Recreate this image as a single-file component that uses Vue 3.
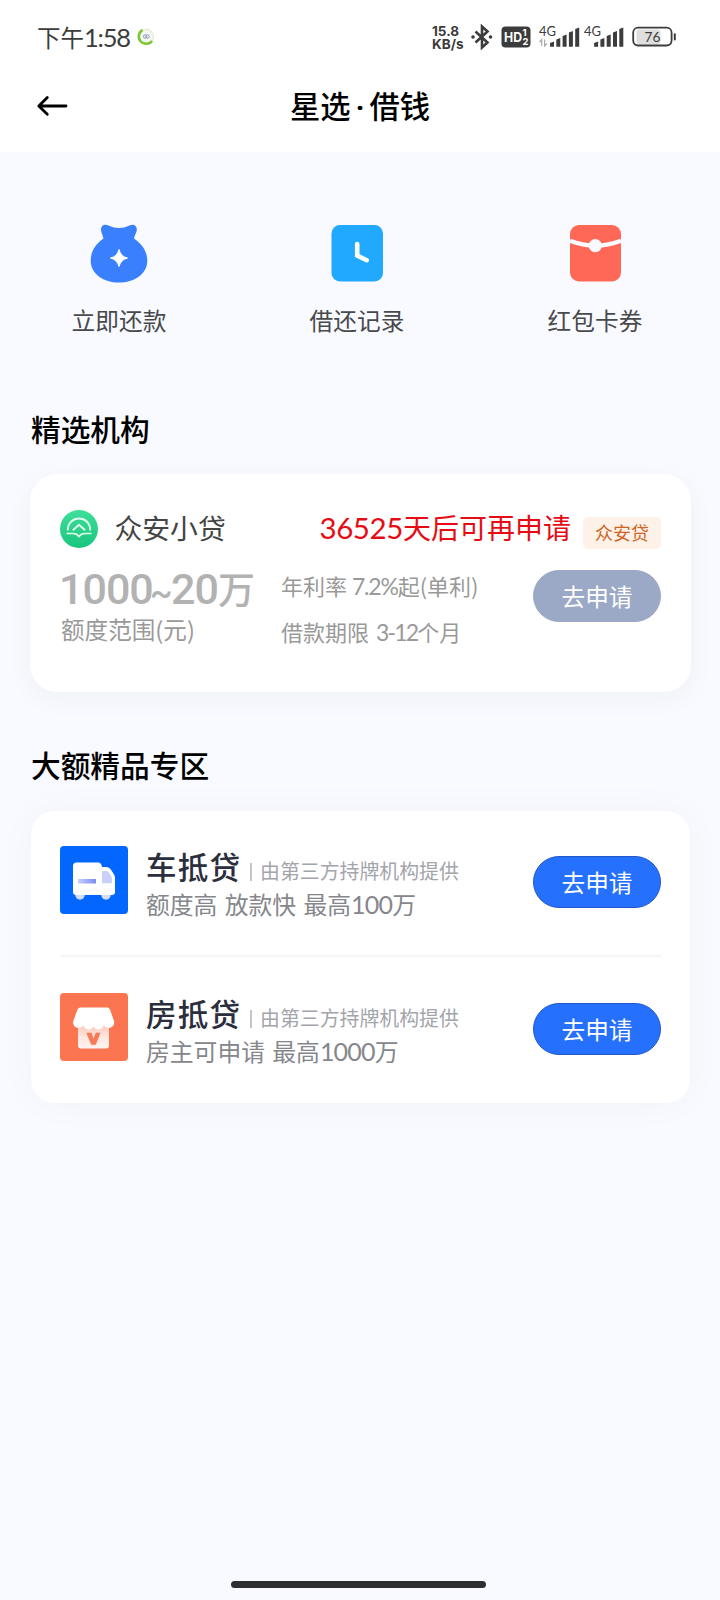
<script setup>
const loans = [
  { id: 'car', name: '车抵贷', pre: '额度高 放款快 最高', amount: '100' },
  { id: 'house', name: '房抵贷', pre: '房主可申请 最高', amount: '1000' },
]
const firstBars = [
  { x: 11, y: 42 }, { x: 17.3, y: 38.5 }, { x: 23.6, y: 35 }, { x: 29.9, y: 31.5 }, { x: 36.2, y: 28 },
]
</script>

<template>
  <div class="screen">
    <div class="status">
      <div class="clock">下午<span class="num">1:58</span></div>
      <svg class="spinner" viewBox="0 0 20 20">
        <circle cx="10" cy="10" r="7.6" fill="#f4f6f1" stroke="#dfeed3" stroke-width="1.2" />
        <path d="M6.5 3A7.4 7.4 0 1 0 16 14" fill="none" stroke="#7cc832" stroke-width="2.6" />
        <circle cx="9" cy="9.5" r="1.7" fill="none" stroke="#9199bd" />
        <circle cx="11.5" cy="9.5" r="1.7" fill="none" stroke="#9199bd" />
      </svg>
      <div class="speed"><span>15.8</span><span>KB/s</span></div>
      <svg class="bt" viewBox="0 0 24 26">
        <path d="M5.5 7.5 17.5 18.5 12 23.5V2.5L17.5 7.5 5.5 18.5" fill="none" stroke="#3c3c3c" stroke-width="2.6" />
        <circle cx="3" cy="13" r="1.8" fill="#3c3c3c" /><circle cx="20.5" cy="13" r="1.8" fill="#3c3c3c" />
      </svg>
      <svg class="hd" viewBox="0 0 30 22">
        <rect x="0.5" y="0.5" width="29" height="21" rx="4" fill="#3c3c3c" />
        <text x="3" y="15.6" font-size="13" font-weight="700" textLength="18" lengthAdjust="spacingAndGlyphs">HD</text>
        <text x="21.5" y="10" font-size="9.5" font-weight="700">1</text>
        <text x="21.5" y="19.2" font-size="9.5" font-weight="700">2</text>
      </svg>
      <svg v-for="n in 2" :key="n" class="signal" viewBox="0 24 42 26">
        <text x="0" y="35.5" font-size="13" textLength="17" lengthAdjust="spacingAndGlyphs">4G</text>
        <path v-if="n === 1" d="M2.7 46V39.5L.5 42M5.6 39.5V46L7.8 43.5" fill="none" stroke="#aaa" stroke-width="1.2" />
        <path
          v-for="b in firstBars" :key="b.x"
          :d="`M${b.x - (n === 2 ? 0.9 : 0)} ${b.y + 1}l4 -1.4V46.7h-4z`" fill="#3c3c3c"
        />
      </svg>
      <svg class="battery" viewBox="0 0 46 22">
        <rect x="4.5" y="3.5" width="24" height="15" rx="3" fill="#dedede" />
        <rect x="1.2" y="1.7" width="38.4" height="17.8" rx="5" fill="none" stroke="#3c3c3c" stroke-width="1.8" />
        <path d="M42.8 8.2v5.2" stroke="#3c3c3c" stroke-width="2" stroke-linecap="round" />
        <text x="12.5" y="15.9" font-size="14" textLength="16" lengthAdjust="spacingAndGlyphs">76</text>
      </svg>
    </div>

    <header class="header">
      <svg class="back" viewBox="0 0 32 24">
        <path d="M30 12H3M11.3 3.6 2.8 12l8.5 8.2" fill="none" stroke="#000" stroke-width="2.8" stroke-linecap="round" stroke-linejoin="round" />
      </svg>
      <h1>星选<span class="dot">·</span>借钱</h1>
    </header>

    <nav class="quick">
      <div class="entry">
        <svg viewBox="0 0 60 60">
          <path d="M14.5 15.5C13.5 11 11.7 9 12 5.8 12.5 2 16 .8 19.5 2.5Q30 7.5 40.5 2.5C44 .8 47.2 2 47.8 5.8 48.2 9 46 11 45 15.5 53 21 58.3 28.5 58.3 37.5 58.3 51.5 45 59.5 30 59.5S1.7 51.5 1.7 37.5C1.7 28.5 6.5 21 14.5 15.5Z" fill="#397ffe" />
          <path d="M30 26.5Q31.8 33.7 38.5 35 31.8 36.7 30 43.5 28.2 36.7 21.5 35 28.2 33.7 30 26.5Z" fill="#fff" stroke="#fff" stroke-linejoin="round" />
        </svg>
        <span>立即还款</span>
      </div>
      <div class="entry">
        <svg viewBox="0 0 60 60">
          <rect x="4.5" y="2" width="51.5" height="56.5" rx="8.5" fill="#21a9ff" />
          <path d="M30.2 21V32.5L39.7 37.2" fill="none" stroke="#fff" stroke-width="4.6" stroke-linecap="round" />
        </svg>
        <span>借还记录</span>
      </div>
      <div class="entry">
        <svg viewBox="0 0 60 60">
          <rect x="5" y="2" width="51" height="56.5" rx="9" fill="#ff6856" />
          <path d="M5 17.8Q30.5 27.5 56 17.8" fill="none" stroke="#f8faff" stroke-width="4.3" />
          <circle cx="30.3" cy="22.6" r="6.6" fill="#f8faff" />
        </svg>
        <span>红包卡券</span>
      </div>
    </nav>

    <h2 class="first-title">精选机构</h2>
    <section class="card partner">
      <div class="row">
        <svg class="brand" viewBox="0 0 38 38">
          <defs><linearGradient id="brandFill" x1="0" y1="0" x2="0" y2="1"><stop stop-color="#3edf99" /><stop offset="1" stop-color="#19c47f" /></linearGradient></defs>
          <circle cx="19" cy="19" r="19" fill="url(#brandFill)" />
          <g fill="none" stroke="#e3fff2" stroke-width="1.8">
            <path d="M7.8 20.5C7.6 4.5 30.4 4.5 30.2 20.5" />
            <path d="M12.8 20.2 19 14.8l6.2 5.4" stroke-width="2" />
            <path d="M6.5 23.5H13Q17 23.5 19 26.5 21 23.5 25 23.5H31.5" stroke-width="1.7" />
          </g>
        </svg>
        <span class="org">众安小贷</span>
        <span class="wait"><span class="num">36525</span>天后可再申请</span>
        <span class="tag">众安贷</span>
      </div>
      <div class="body">
        <div class="quota">
          <div class="range"><span class="low">1000</span><span class="tilde">~</span><span class="high">20</span>万</div>
          <div class="caption">额度范围(元)</div>
        </div>
        <div class="terms">
          <div>年利率 <span class="num rate">7.2%</span>起(单利)</div>
          <div>借款期限 <span class="num months">3-12</span>个月</div>
        </div>
        <button class="apply off">去申请</button>
      </div>
    </section>

    <h2 class="second-title">大额精品专区</h2>
    <section class="card loans">
      <div v-for="l in loans" :key="l.id" class="loan">
        <svg v-if="l.id === 'car'" class="thumb" viewBox="0 0 68 68">
          <defs>
            <linearGradient id="stripe"><stop stop-color="#c7cdfb" /><stop offset="1" stop-color="#7b8cf0" /></linearGradient>
          </defs>
          <rect width="68" height="68" rx="4" fill="#0367ff" />
          <circle cx="20" cy="49" r="4.7" fill="#d6dcff" /><circle cx="46" cy="49" r="4.7" fill="#d6dcff" />
          <path d="M16.5 16.5H38Q41.5 16.5 42 21H46Q49 21 50.5 23L54 28.5Q55 30 55 32V46Q55 49 52 49H16Q13 49 13 46V20Q13 16.5 16.5 16.5Z" fill="#fff" />
          <path d="M43 25H46.5Q48 25 49 26.7L51.5 31Q52 32 52 33V36Q52 37.3 50.5 37.3H42V26Q42 25 43 25Z" fill="#c9d0fa" />
          <rect x="18" y="33" width="18" height="4.5" fill="url(#stripe)" />
        </svg>
        <svg v-else class="thumb" viewBox="0 0 68 68">
          <defs><linearGradient id="shop" x1="0" y1="0" x2="0" y2="1"><stop stop-color="#fcc2b3" /><stop offset="0.55" stop-color="#ffe7df" /><stop offset="1" stop-color="#fff3ef" /></linearGradient></defs>
          <rect width="68" height="68" rx="4" fill="#fb7551" />
          <path d="M18 30H49V52Q49 55.5 46 55.5H21Q18 55.5 18 52Z" fill="url(#shop)" />
          <path d="M20.5 14.5H47Q49 14.5 50 16.5L54 28C55.3 34 48 37.5 43.8 32.5 41 37.5 36 37.5 33.5 33.5 31 37.5 25.5 37.5 23.3 32.5 19 37.5 12 34 13.3 28L17.5 16.5Q18.5 14.5 20.5 14.5Z" fill="#fff" />
          <path d="M26.3 39.7H31.5L33.5 45.5 35.7 39.7H40.5L35.8 51.7H31.2Z" fill="#fa7956" />
        </svg>
        <div class="info">
          <div class="head"><b>{{ l.name }}</b><i></i><small>由第三方持牌机构提供</small></div>
          <div class="desc">{{ l.pre }}<span class="num">{{ l.amount }}</span>万</div>
        </div>
        <button class="apply">去申请</button>
      </div>
    </section>

    <div class="home-bar"></div>
  </div>
</template>

<style>
body {
  background: #f8faff;
}
</style>

<style scoped>
.screen {
  box-sizing: border-box;
  width: 720px;
  height: 1600px;
  display: flex;
  flex-direction: column;
  overflow: hidden;
  background: #f8faff;
  font-family: "Noto Sans CJK SC", sans-serif;
  white-space: nowrap;
}
svg {
  display: block;
  flex: none;
}
.num {
  font-family: Lato, "Noto Sans CJK SC", sans-serif;
  line-height: 0;
}
.status {
  height: 74px;
  flex: none;
  display: flex;
  align-items: center;
  background: #fff;
  color: #3c3c3c;
  font-size: 23.5px;
}
.clock {
  width: 99px;
  margin: -1px 0 0 37px;
  line-height: 30px;
}
.clock .num {
  font-size: 25.5px;
  letter-spacing: -1.2px;
}
.spinner {
  width: 20px;
  height: 20px;
}
.speed {
  width: 40px;
  margin: 1px 0 0 276px;
  display: flex;
  flex-direction: column;
  font: 700 13.5px/13px Inter, sans-serif;
}
.bt {
  width: 24px;
  height: 26px;
  margin-left: -2px;
}
.hd {
  width: 30px;
  height: 22px;
  margin-left: 7px;
}
.hd text {
  fill: #fff;
  font-family: Inter, sans-serif;
}
.signal {
  width: 42px;
  height: 26px;
  margin-left: 8px;
}
.signal + .signal {
  margin-left: 3px;
}
.signal text,
.battery text {
  fill: #3c3c3c;
  font-family: Lato, sans-serif;
}
.battery {
  width: 46px;
  height: 22px;
  margin-left: 6px;
}
.header {
  height: 78px;
  flex: none;
  display: grid;
  grid-template-columns: 100px 1fr 100px;
  background: #fff;
}
.back {
  width: 32px;
  height: 24px;
  margin: 20px 0 0 36px;
}
h1,
h2 {
  margin: 0;
  font-weight: 500;
  color: #000;
}
h1 {
  text-align: center;
  font-size: 30.3px;
  line-height: 62px;
}
.dot {
  display: inline-block;
  width: 19px;
  text-align: center;
  font-family: Roboto, sans-serif;
  font-weight: 700;
  line-height: 0;
}
.quick {
  flex: none;
  width: 714px;
  display: grid;
  grid-template-columns: repeat(3, 1fr);
  margin-top: 71px;
}
.entry {
  display: flex;
  flex-direction: column;
  align-items: center;
  gap: 21px;
  color: #48494b;
  font-size: 23.7px;
  line-height: 32px;
}
.entry svg {
  width: 60px;
  height: 60px;
}
h2 {
  margin-left: 31px;
  font-size: 29.7px;
  line-height: 40px;
  flex: none;
}
.first-title {
  margin-top: 73px;
}
.second-title {
  margin-top: 53px;
}
.card {
  box-sizing: border-box;
  flex: none;
  width: 661px;
  margin-left: 30px;
  background: #fff;
}
.partner {
  height: 218px;
  margin-top: 25px;
  padding: 35px 30px 0;
  border-radius: 27px;
  box-shadow: 0 6px 28px rgba(30, 40, 80, 0.045);
}
.row {
  height: 40px;
  display: flex;
  align-items: center;
}
.brand {
  width: 38px;
  height: 38px;
}
.org {
  margin: -4px 0 0 16.5px;
  font-size: 27.8px;
  line-height: 40px;
  color: #444;
}
.wait {
  margin: -4px 0 0 auto;
  font-size: 28px;
  line-height: 40px;
  color: #e60c14;
}
.wait .num {
  font-size: 29.5px;
  letter-spacing: -0.4px;
}
.tag {
  width: 78px;
  height: 32px;
  margin: 8px 0 0 12px;
  border-radius: 5px;
  background: #fef2e8;
  color: #cf6425;
  font-size: 18px;
  line-height: 30px;
  text-align: center;
}
.body {
  display: flex;
  margin-top: 20px;
}
.quota {
  width: 221px;
  color: #b2b2b2;
}
.range {
  height: 42px;
  font-size: 37px;
  font-weight: 500;
  line-height: 38px;
}
.range span {
  display: inline-block;
  font-family: Roboto, sans-serif;
  font-size: 43px;
  line-height: 0;
  letter-spacing: -1px;
}
.range .low {
  width: 91px;
  margin-left: -1px;
}
.range .tilde {
  width: 21px;
  font-size: 34px;
}
.range .high {
  width: 47px;
}
.caption {
  margin-left: 1px;
  font-size: 23.6px;
  line-height: 37px;
  color: #999;
}
.terms {
  flex: 1;
  font-size: 22px;
  line-height: 45.5px;
  color: #999;
  margin-top: -6px;
}
.terms .num {
  font-size: 23px;
}
.terms .rate {
  letter-spacing: -1.2px;
}
.terms .months {
  margin-left: 2px;
  letter-spacing: -1.8px;
}
.apply {
  box-sizing: border-box;
  width: 128px;
  height: 52px;
  padding: 0;
  border: 1px solid #2258c8;
  border-radius: 26px;
  background: #2670fe;
  color: #fff;
  font-family: inherit;
  font-size: 23.7px;
  line-height: 46px;
}
.apply.off {
  margin-top: 1px;
  border-color: #9ba9c7;
  background: #9ba9c7;
}
.loans {
  width: 659px;
  height: 292px;
  margin: 26px 0 0 31px;
  padding: 0 29px;
  border-radius: 24px;
  box-shadow: 0 0 40px rgba(30, 40, 80, 0.03);
}
.loan {
  height: 144px;
  display: flex;
}
.loan + .loan {
  height: 148px;
  border-top: 2px solid #f4f5f7;
}
.thumb {
  width: 68px;
  height: 68px;
  margin-top: 35px;
}
.loan + .loan .thumb {
  margin-top: 36px;
}
.info {
  flex: 1;
  margin: 35px 0 0 18px;
}
.loan + .loan .info {
  margin-top: 36px;
}
.head {
  display: flex;
  align-items: center;
  height: 40px;
}
.head b {
  width: 96px;
  font-size: 30.5px;
  font-weight: 500;
  letter-spacing: 1.2px;
  line-height: 40px;
  color: #2b2f3d;
}
.head i {
  width: 2px;
  height: 18px;
  margin: 11px 8px 0 8px;
  background: #c4c5ca;
}
.head small {
  font-size: 19.9px;
  line-height: 30px;
  margin-top: 10px;
  color: #a3a5aa;
}
.desc {
  font-size: 23.8px;
  line-height: 36px;
  color: #85878c;
  word-spacing: 2px;
}
.desc .num {
  font-size: 25px;
  letter-spacing: -0.8px;
}
.loan .apply {
  margin-top: 45px;
}
.loan + .loan .apply {
  margin-top: 46px;
}
.home-bar {
  width: 255px;
  height: 7px;
  flex: none;
  margin: auto 0 12px 231px;
  border-radius: 4px;
  background: #2f2f31;
}
</style>
